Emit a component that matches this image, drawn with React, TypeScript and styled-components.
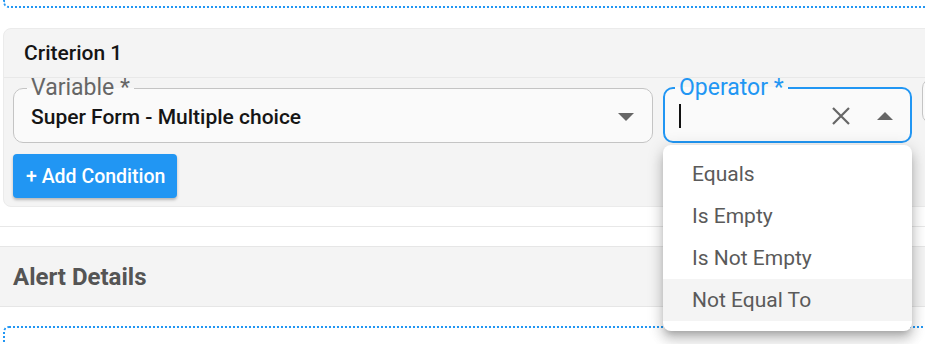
import React from "react";
import styled, { createGlobalStyle } from "styled-components";

const Global = createGlobalStyle`
  html, body {
    margin: 0;
    padding: 0;
    background: #fff;
    overflow: hidden;
    font-family: Roboto, "Liberation Sans", Arial, sans-serif;
  }
`;

const Page = styled.div`
  width: 925px;
  height: 344px;
  overflow: hidden;
`;

const DottedEnd = styled.div`
  margin-left: 3px;
  width: 1100px;
  height: 6px;
  border-left: 2px dotted #2196f3;
  border-bottom: 2px dotted #2196f3;
  border-bottom-left-radius: 6px;
`;

const DottedStart = styled.div`
  margin: 19px 0 0 3px;
  width: 1100px;
  height: 30px;
  border-left: 2px dotted #2196f3;
  border-top: 2px dotted #2196f3;
  border-top-left-radius: 6px;
`;

const Card = styled.section`
  margin: 20px 0 0 3px;
  width: 1100px;
  background: #f4f4f4;
  border: 1px solid #ebebeb;
  border-radius: 8px;
`;

const CardTitle = styled.h3`
  margin: 0;
  height: 48px;
  display: flex;
  align-items: center;
  padding-left: 20px;
  font-size: 21px;
  font-weight: 500;
  line-height: 1;
  color: #151515;
  border-bottom: 1px solid #e8e8e8;
`;

const CardBody = styled.div`
  padding: 0 9px 8px;
`;

const FieldRow = styled.div`
  display: flex;
  gap: 10px;
  align-items: flex-start;
`;

const FieldWrap = styled.div<{ $width: number }>`
  position: relative;
  width: ${(p) => p.$width}px;
  flex: none;
`;

const Fieldset = styled.fieldset<{ $focused?: boolean }>`
  margin: 0;
  padding: 0 ${(p) => (p.$focused ? 15 : 16)}px 0 ${(p) => (p.$focused ? 14 : 17)}px;
  border: ${(p) => (p.$focused ? "2px solid #2196f3" : "1px solid #c4c4c4")};
  border-radius: 10px;
  background: #fafafa;
  min-width: 0;
`;

const Legend = styled.legend<{ $focused?: boolean }>`
  margin-left: -4px;
  padding: 0 4px;
  font-size: 23px;
  line-height: 20px;
  color: ${(p) => (p.$focused ? "#2196f3" : "#666")};
`;

const EmptyLegend = styled.legend`
  width: 0;
  padding: 0;
  font-size: 23px;
  line-height: 20px;
`;

const InputLine = styled.div<{ $h: number }>`
  height: ${(p) => p.$h}px;
  padding-bottom: 7px;
  box-sizing: border-box;
  display: flex;
  align-items: center;
  gap: 10px;
`;

const Value = styled.span`
  flex: 1;
  font-size: 21px;
  font-weight: 500;
  color: #151515;
  white-space: nowrap;
`;

const Caret = styled.span`
  flex: none;
  width: 2px;
  height: 24px;
  background: #111;
`;

const Spacer = styled.span`
  flex: 1;
`;

const IconBtn = styled.span<{ $gap: number }>`
  display: flex;
  align-items: center;
  justify-content: center;
  margin-right: ${(p) => p.$gap}px;
  color: #666;
`;

const AddButton = styled.button`
  margin-top: 11px;
  height: 44px;
  padding: 0 12px 0 13px;
  border: none;
  border-radius: 4px;
  background: #2196f3;
  color: #fff;
  font-family: inherit;
  font-size: 19.5px;
  font-weight: 500;
  box-shadow: 0 2px 3px rgba(0, 0, 0, 0.25);
  cursor: pointer;
`;

const Divider = styled.div`
  margin-top: 19px;
  height: 19px;
  border-top: 1px solid #e8e8e8;
`;

const SectionHeader = styled.div`
  height: 59px;
  display: flex;
  align-items: center;
  padding-left: 13px;
  background: #f4f4f4;
  border-top: 1px solid #e6e6e6;
  border-bottom: 1px solid #e6e6e6;
  font-size: 24px;
  font-weight: 700;
  color: #555;
`;

const Menu = styled.ul`
  position: absolute;
  top: calc(100% + 2px);
  left: 0;
  width: 249px;
  margin: 0;
  padding: 8px 0 10px;
  list-style: none;
  background: #fff;
  border-radius: 8px;
  box-shadow: 0 5px 6px -3px rgba(0, 0, 0, 0.2), 0 9px 12px 1px rgba(0, 0, 0, 0.14),
    0 3px 16px 2px rgba(0, 0, 0, 0.12);
  z-index: 10;
`;

const MenuItem = styled.li<{ $active?: boolean }>`
  height: 42px;
  display: flex;
  align-items: center;
  padding-left: 29px;
  font-size: 21px;
  color: #5a5a5a;
  background: ${(p) => (p.$active ? "#f4f4f4" : "transparent")};
`;

const ArrowDown = () => (
  <svg width="16" height="8" viewBox="0 0 16 8">
    <path d="M0 0h16L8 8z" fill="currentColor" />
  </svg>
);

const ArrowUp = () => (
  <svg width="16" height="8" viewBox="0 0 16 8">
    <path d="M0 8h16L8 0z" fill="currentColor" />
  </svg>
);

const Clear = () => (
  <svg width="18" height="18" viewBox="0 0 18 18">
    <path d="M1 1l16 16M17 1L1 17" stroke="currentColor" strokeWidth="2.2" fill="none" />
  </svg>
);

const operators = ["Equals", "Is Empty", "Is Not Empty", "Not Equal To"];

export default function App() {
  return (
    <Page>
      <Global />
      <DottedEnd />
      <Card>
        <CardTitle>Criterion 1</CardTitle>
        <CardBody>
          <FieldRow>
            <FieldWrap $width={640}>
              <Fieldset>
                <Legend>Variable *</Legend>
                <InputLine $h={44}>
                  <Value>Super Form - Multiple choice</Value>
                  <IconBtn $gap={2}>
                    <ArrowDown />
                  </IconBtn>
                </InputLine>
              </Fieldset>
            </FieldWrap>
            <FieldWrap $width={249}>
              <Fieldset $focused>
                <Legend $focused>Operator *</Legend>
                <InputLine $h={43}>
                  <Caret />
                  <Spacer />
                  <IconBtn $gap={17}>
                    <Clear />
                  </IconBtn>
                  <IconBtn $gap={2}>
                    <ArrowUp />
                  </IconBtn>
                </InputLine>
              </Fieldset>
              <Menu>
                {operators.map((op) => (
                  <MenuItem key={op} $active={op === "Not Equal To"}>
                    {op}
                  </MenuItem>
                ))}
              </Menu>
            </FieldWrap>
            <FieldWrap $width={200}>
              <Fieldset>
                <EmptyLegend />
                <InputLine $h={44} />
              </Fieldset>
            </FieldWrap>
          </FieldRow>
          <AddButton>+ Add Condition</AddButton>
        </CardBody>
      </Card>
      <Divider />
      <SectionHeader>Alert Details</SectionHeader>
      <DottedStart />
    </Page>
  );
}
